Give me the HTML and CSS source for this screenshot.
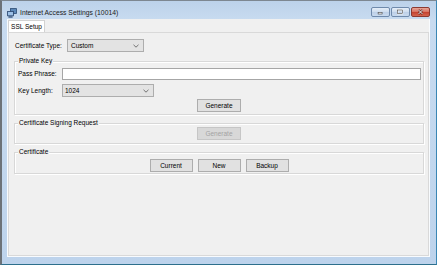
FILE: index.html
```html
<!DOCTYPE html>
<html lang="en">
<head>
  <meta charset="UTF-8">
  <meta name="viewport" content="width=device-width, initial-scale=1.0">
  <title>Internet Access Settings (10014)</title>

  <link rel="stylesheet" href="styles.css">
</head>

<body>
  <div class="window">
    <div class="titlebar">
      <svg class="app-icon" viewBox="0 0 10 10">
        <rect x="3.4" y="0.6" width="6" height="4.8" fill="#5b87b8" stroke="#2a4a72" stroke-width="0.8"/>
        <rect x="0.6" y="3.4" width="5.8" height="4.4" fill="#9cc0e6" stroke="#23406a" stroke-width="0.8"/>
        <rect x="1.4" y="8.4" width="4.2" height="1.2" fill="#23406a"/>
      </svg>
      <span class="title">Internet Access Settings (10014)</span>
      <div class="caption-buttons">
        <span class="caption-button">
          <svg viewBox="0 0 19 10"><rect x="6.5" y="5.5" width="5" height="2" fill="#fff" stroke="#3a3a3a" stroke-width="0.7"/></svg>
        </span>
        <span class="caption-button">
          <svg viewBox="0 0 19 10"><rect x="6" y="2.5" width="6" height="4.6" fill="none" stroke="#fff" stroke-width="1.6"/><rect x="6" y="2.5" width="6" height="4.6" fill="none" stroke="#333" stroke-width="0.7"/></svg>
        </span>
        <span class="caption-button close">
          <svg viewBox="0 0 19 10"><path d="M7 2.5 L12 7.5 M12 2.5 L7 7.5" stroke="#5a1f1a" stroke-width="2.4"/><path d="M7 2.5 L12 7.5 M12 2.5 L7 7.5" stroke="#fff" stroke-width="1.2"/></svg>
        </span>
      </div>
    </div>

    <div class="client">
      <div class="tab-strip">
        <span class="tab">SSL Setup</span>
      </div>

      <div class="tab-page">
        <div class="field cert-type">
          <label class="label label-wide">Certificate Type:</label>
          <div class="combo combo-type">
            <span>Custom</span>
            <svg class="chevron" viewBox="0 0 6 4"><polyline points="0.5,0.8 3,3.2 5.5,0.8" fill="none" stroke="#555" stroke-width="0.8"/></svg>
          </div>
        </div>

        <div class="group group-key">
          <span class="legend">Private Key</span>
          <div class="field pass-row">
            <label class="label">Pass Phrase:</label>
            <div class="textbox"></div>
          </div>
          <div class="field length-row">
            <label class="label">Key Length:</label>
            <div class="combo combo-length">
              <span>1024</span>
              <svg class="chevron" viewBox="0 0 6 4"><polyline points="0.5,0.8 3,3.2 5.5,0.8" fill="none" stroke="#555" stroke-width="0.8"/></svg>
            </div>
          </div>
          <div class="actions key-actions">
            <button class="button button-wide">Generate</button>
          </div>
        </div>

        <div class="group group-csr">
          <span class="legend">Certificate Signing Request</span>
          <div class="actions">
            <button class="button button-wide" disabled>Generate</button>
          </div>
        </div>

        <div class="group group-cert">
          <span class="legend">Certificate</span>
          <div class="actions cert-actions">
            <button class="button">Current</button>
            <button class="button">New</button>
            <button class="button">Backup</button>
          </div>
        </div>
      </div>
    </div>
  </div>
</body>
</html>
```

FILE: styles.css
```css
/* Resets */
* {
  box-sizing: border-box;
  margin: 0;
  padding: 0;
}

body {
  background: #fff;
  font-family: "Liberation Sans", Arial, sans-serif;
  font-size: 6.5px;
  color: #000;
}

/* Window frame */
.window {
  width: 437px;
  height: 265px;
  display: flex;
  flex-direction: column;
  padding: 0 6px 7px 5px;
  border-top: 1px solid #7d8791;
  border-left: 2px solid #6c7278;
  border-right: 1px solid #3a86b4;
  border-bottom: 1px solid #2d6f8c;
  background: linear-gradient(#bcd2ea, #c8dbf0 19px, #c2d7ee 60%, #bdd3ec);
}

.titlebar {
  height: 18px;
  display: flex;
  align-items: flex-start;
}

.app-icon {
  width: 10px;
  height: 10px;
  margin-top: 7px;
}

.title {
  margin: 8px 0 0 3px;
  font-size: 6.8px;
  line-height: 8px;
  color: #1b1b1b;
}

.caption-buttons {
  margin-left: auto;
  margin-top: 6px;
  display: flex;
  gap: 1px;
}

.caption-button {
  width: 19px;
  height: 10px;
  border: 1px solid #6f8aac;
  border-radius: 2px;
  background: linear-gradient(#e4edf8, #cddcee 50%, #bccfe7 50%, #c9daee);

  & svg {
    display: block;
    width: 17px;
    height: 8px;
  }
}

.caption-button.close {
  border-color: #8b3a32;
  background: linear-gradient(#e8a598, #d6705f 50%, #c4402e 50%, #d3654f);
}

/* Client area */
.client {
  height: 238px;
  display: flex;
  flex-direction: column;
  background: #f0f0f0;
  border: 1px solid #f8fbfe;
  border-top: 0;
}

.tab-strip {
  height: 13px;
  padding-top: 1px;
  display: flex;
}

.tab {
  width: 37px;
  height: 12px;
  border: 1px solid #d2d2d2;
  border-bottom: 0;
  background: #fff;
  text-align: center;
  line-height: 11px;
}

.tab-page {
  flex: 1;
  padding: 6px 0 0 5px;
  border: 1px solid #d9d9d9;
}

/* Fields */
.field {
  display: flex;
  align-items: center;
}

.cert-type {
  margin-left: 1px;
}

.label {
  width: 44px;
  line-height: 8px;
}

.label-wide {
  width: 52px;
}

.combo {
  height: 13px;
  display: flex;
  align-items: center;
  padding-left: 3px;
  border: 1px solid #adadad;
  background: #e3e3e3;
}

.combo-type {
  width: 77px;
}

.combo-length {
  width: 92px;
  padding-left: 2px;
}

.chevron {
  width: 6px;
  height: 4px;
  margin-left: auto;
  margin-right: 4px;
}

.textbox {
  width: 359px;
  height: 12px;
  border: 1px solid #a6a6a6;
  background: #fff;
}

/* Group boxes */
.group {
  width: 410px;
  margin-top: 8px;
  border: 1px solid #d8d8d8;
  box-shadow: inset 1px 1px 0 #fff, 1px 1px 0 #fff;
}

.legend {
  display: block;
  width: max-content;
  margin: -5px 0 0 3px;
  padding: 0 1px;
  line-height: 8px;
  background: #f0f0f0;
}

.group-key {
  height: 54px;
  margin-top: 9px;

  & .field {
    padding-left: 3px;
  }
}

.pass-row {
  margin-top: 3px;
}

.length-row {
  margin-top: 4px;
}

.key-actions {
  margin-top: 2px;
}

.group-csr {
  height: 21px;
}

.group-cert {
  height: 22px;
}

.cert-actions {
  margin-top: 3px;
}

/* Buttons */
.actions {
  display: flex;
  justify-content: center;
  gap: 5px;
}

.button {
  width: 43px;
  height: 13px;
  font: inherit;
  line-height: 11px;
  color: #000;
  border: 1px solid #adadad;
  background: #e1e1e1;
}

.button-wide {
  width: 44px;
}

.button:disabled {
  color: #a3a3a3;
  border-color: #c6c6c6;
  background: #d8d8d8;
}
```
